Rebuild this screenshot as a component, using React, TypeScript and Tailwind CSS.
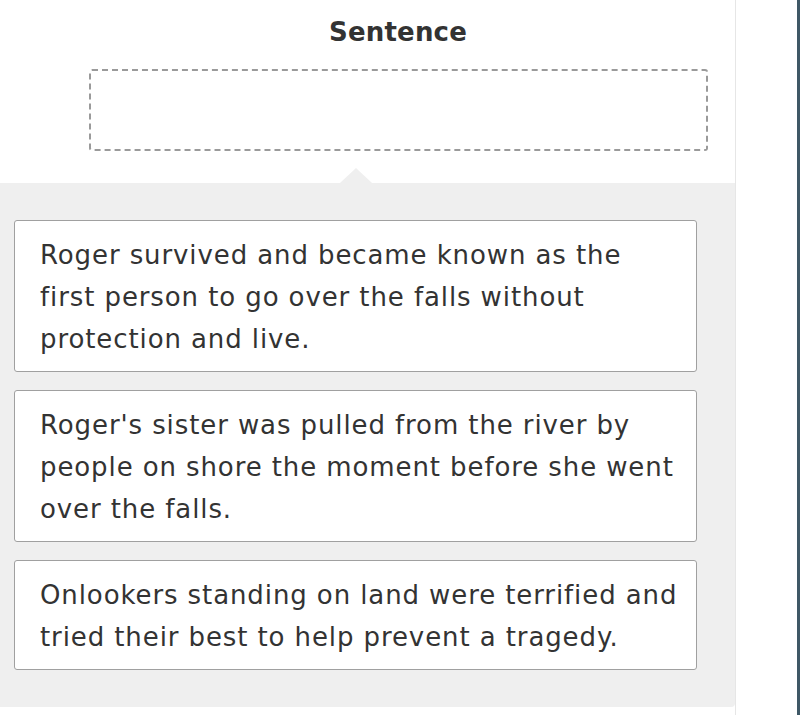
const cards = [
  ['Roger survived and became known as the', 'first person to go over the falls without', 'protection and live.'],
  ["Roger's sister was pulled from the river by", 'people on shore the moment before she went', 'over the falls.'],
  ['Onlookers standing on land were terrified and', 'tried their best to help prevent a tragedy.'],
]

export default function App() {
  return (
    <div className="flex h-[715px] w-[800px] bg-white font-['DejaVu_Sans',sans-serif] text-[#333]">
      <div className="flex w-[736px] shrink-0 flex-col border-r border-[#e6e6e6]">
        {/* drop zone */}
        <div className="flex h-[183px] flex-col bg-white">
          <h2 className="ml-[89px] mt-[15px] w-[618px] text-center text-[26px] font-bold leading-[34px] tracking-[0.2px] text-[#333]">Sentence</h2>
          <div className="ml-[89px] mt-[20px] h-[82px] w-[619px] rounded-[3px] border-2 border-dashed border-[#9a9a9a]" />
        </div>

        {/* answer bank */}
        <div className="relative flex h-[524px] flex-col gap-[18px] rounded-br-[4px] bg-[#efefef] pl-[14px] pr-[38px] pt-[37px]">
          <div className="absolute left-[340px] top-[-15px] h-0 w-0 border-x-[16px] border-b-[15px] border-x-transparent border-b-[#efefef]" />
          {cards.map((lines, i) => (
            <div
              key={i}
              className="rounded-[3px] border border-[#a0a0a0] bg-white pb-[11px] pl-[25px] pr-[10px] pt-[13px] text-[26px] leading-[42px] tracking-[0.9px]"
            >
              {lines.map((l, j) => (
                <div key={j} className="whitespace-nowrap">{l}</div>
              ))}
            </div>
          ))}
        </div>
      </div>
      <div className="flex-1" />
      <div className="w-[3px] bg-[#3f5866]" />
    </div>
  )
}
